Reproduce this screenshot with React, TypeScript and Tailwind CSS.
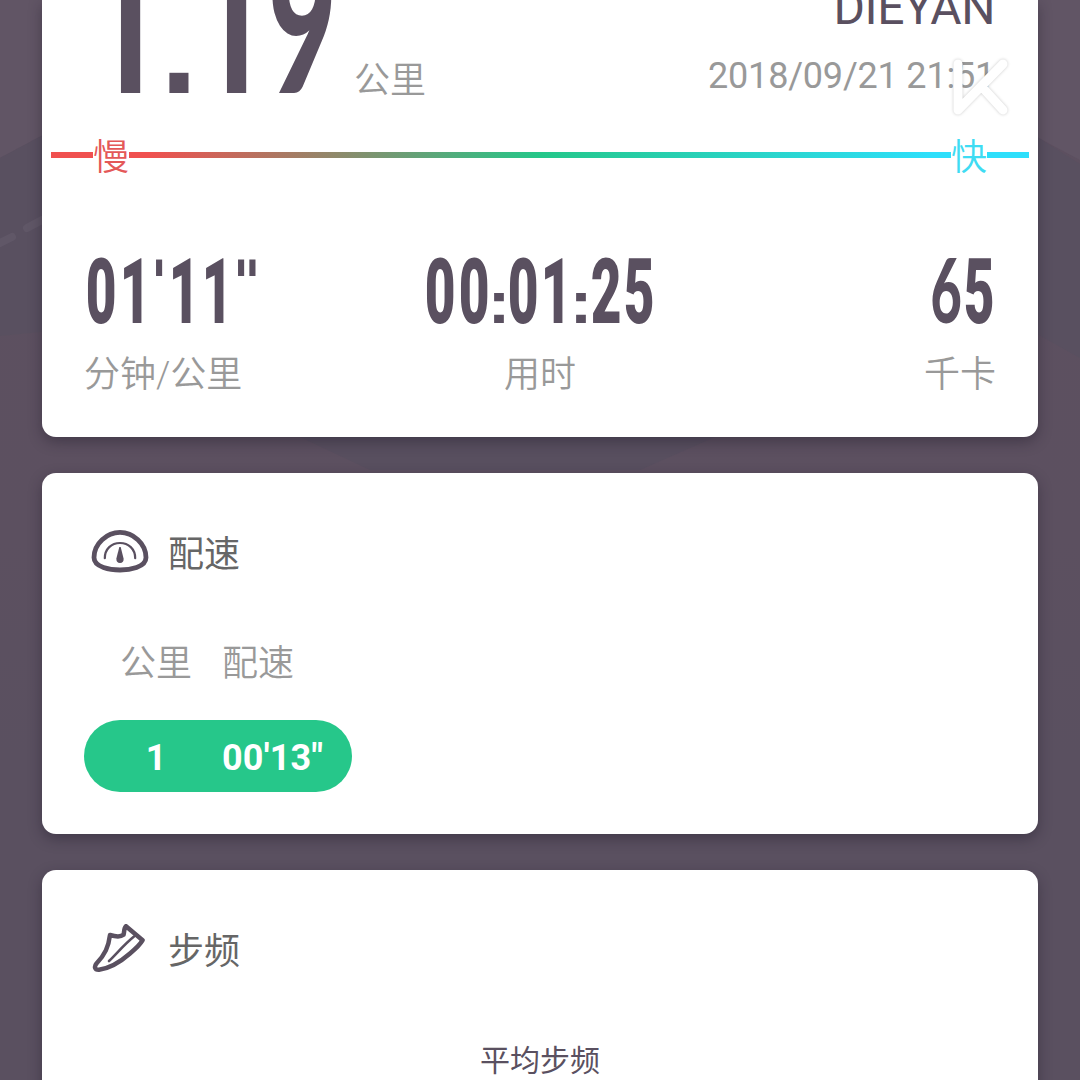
import React from "react";

type Size = "small" | "large";

const cellWidth: Record<Size, Record<string, string>> = {
  small: { digit: "w-[33.1px]", mark: "w-[16.7px]", double: "w-[25px]" },
  large: { digit: "w-[70px]", mark: "w-[36px]", double: "w-[50px]" },
};

const markStyle: Record<Size, string> = {
  small: "font-['Liberation_Sans'] text-[60px] leading-[40px] scale-x-[1.15]",
  large: "font-['Liberation_Sans'] text-[135px] leading-[100px] scale-x-100",
};

function glyphClass(c: string, size: Size) {
  if (c === ":" || c === ".") return markStyle[size];
  if (c === "'" || c === '"') return "font-['DejaVu_Sans'] text-[60px] leading-[40px] scale-x-[0.88] -translate-y-[19px]";
  if (c === "6" || c === "9") return "font-['Lato'] font-black leading-[0.4] scale-x-[0.6]";
  return "font-black scale-x-[0.59]";
}

function Digits({ value, size = "small" }: { value: string; size?: Size }) {
  const cells = cellWidth[size];
  const text = size === "small" ? "h-16 text-[90px] leading-[64px]" : "h-[136px] text-[198px] leading-[136px]";
  return (
    <div className={`flex items-baseline font-bold text-[#5a5060] ${text}`}>
      {value.split("").map((c, i) => {
        const w = c === '"' ? cells.double : "':.".includes(c) ? cells.mark : cells.digit;
        return (
          <span key={i} className={`flex shrink-0 items-baseline justify-center ${w}`}>
            <span className={`block origin-center ${glyphClass(c, size)}`}>{c}</span>
          </span>
        );
      })}
    </div>
  );
}

function Backdrop() {
  return (
    <svg className="absolute inset-0 -z-10" width="1080" height="1080" viewBox="0 0 1080 1080">
      <defs>
        <linearGradient id="fade" x1="0" y1="0" x2="0" y2="1">
          <stop offset="0" stopColor="#5d5060" />
          <stop offset="0.5" stopColor="#5c5060" />
          <stop offset="0.7" stopColor="#5a5060" />
        </linearGradient>
      </defs>
      <rect width="1080" height="1080" fill="url(#fade)" />
      <path d="M0 0H1080V160L1020 128L540 0L60 126L0 158Z" fill="#615565" />
      <path d="M0 158L60 126H1020L1080 164V358L1030 330H60L0 336Z" fill="#595060" />
      <path d="M300 437L370 470H640L715 437Z" fill="#584f5f" />
      <path d="M0 243L12 237M27 228L42 220" stroke="#605767" strokeWidth="8" strokeLinecap="round" />
    </svg>
  );
}

function Gauge() {
  return (
    <svg width="58" height="44" viewBox="0 0 58 44" fill="none" stroke="#5a5060">
      <path
        d="M29 2.400C42 2.400 55 13.500 55 27.500C55 33 51 35.500 45.500 37.500C36 40.800 22 40.800 12.500 37.500C7 35.500 3 33 3 27.500C3 13.500 16 2.400 29 2.400Z"
        strokeWidth="4.800"
      />
      <path d="M13.800 28.200C13.800 19 20.500 13 29 13S44.200 19 44.200 28.200" strokeWidth="2.200" strokeLinecap="round" />
      <path d="M28.300 17H29.700L32.600 28.500C33 31 31.500 33 29 33S25 31 25.400 28.500Z" fill="#5a5060" stroke="none" />
    </svg>
  );
}

function Shoe() {
  return (
    <svg width="58" height="50" viewBox="0 0 58 50" fill="none" stroke="#5a5060" strokeLinejoin="round" strokeLinecap="round">
      <path
        d="M35 2.200L51.600 16.200C49.500 20 45 24.500 39 29.500C31 36.500 20 44 8 45.800C3.500 46 3 42.500 5.500 39.500C14 30.500 17.500 23 19 11C24 12.500 30 12.800 32.500 10.800C33.500 8.500 32.500 4.500 35 2.200Z"
        strokeWidth="4.500"
      />
      <path d="M18 37C25 30.500 33 20.500 43 12.500" strokeWidth="2.600" />
    </svg>
  );
}

function Watermark() {
  return (
    <svg
      className="absolute top-[52px] left-[904px] overflow-visible drop-shadow-[0_0_1.5px_rgba(0,0,0,0.22)]"
      width="64"
      height="70"
      viewBox="0 0 64 70"
      fill="none"
      stroke="white"
      strokeWidth="9"
      strokeLinecap="round"
      strokeLinejoin="round"
    >
      <path d="M12 12V58L57 12M36 35L57 58" />
    </svg>
  );
}

const card = "relative bg-white shadow-[0_5px_14px_rgba(30,25,40,0.4)]";

function SectionTitle({ icon, title }: { icon: React.ReactNode; title: string }) {
  return (
    <div className="flex items-center">
      <div className="flex w-[77px] justify-start">{icon}</div>
      <h2 className="pt-1.5 text-4xl leading-[52px] text-[#666666]">{title}</h2>
    </div>
  );
}

export default function App() {
  return (
    <main className="relative isolate flex h-[1080px] w-[1080px] flex-col gap-9 overflow-hidden px-[42px] font-['Roboto','Noto_Sans_CJK_SC',sans-serif] text-[#999999]">
      <Backdrop />

      <section className={`${card} flex h-[437px] shrink-0 flex-col rounded-b-[14px]`}>
        <header className="flex h-[128px] items-start justify-between pr-[43px] pl-[49px]">
          <div className="flex">
            <div className="-mt-[43px]">
              <Digits value="1.19" size="large" />
            </div>
            <span className="mt-[55px] ml-[17px] text-4xl leading-[52px] font-[350]">公里</span>
          </div>
          <div className="-mt-5 flex flex-col items-end">
            <span className="text-[48px] leading-[56px] tracking-[-0.4px] text-[#5a5060]">DIEYAN</span>
            <time className="mt-4 text-4xl leading-[48px] tracking-[-0.2px]">2018/09/21 21:51</time>
          </div>
        </header>
        <Watermark />

        <div className="mx-[9px] flex h-[54px] items-center bg-[linear-gradient(90deg,#f0504f_0%,#f0504f_10%,#24c789_50%,#2ddffb_90%)] bg-[length:100%_6px] bg-center bg-no-repeat px-[42px] text-4xl leading-[48px] font-[350]">
          <span className="h-[54px] w-9 bg-white pt-1.5 text-[#e45858]">慢</span>
          <span className="ml-auto h-[54px] w-9 bg-white pt-1.5 text-[#3fdcf3]">快</span>
        </div>

        <div className="mt-[79px] grid grid-cols-3 px-[43px] text-4xl leading-[52px] font-[350]">
          <div className="flex flex-col items-start gap-6">
            <Digits value={`01'11"`} />
            <span className="-ml-px">分钟/公里</span>
          </div>
          <div className="flex flex-col items-center gap-6">
            <Digits value="00:01:25" />
            <span>用时</span>
          </div>
          <div className="-mr-px flex flex-col items-end gap-6">
            <Digits value="65" />
            <span>千卡</span>
          </div>
        </div>
      </section>

      <section className={`${card} h-[361px] shrink-0 rounded-[14px] px-[42px] pt-[50px]`}>
        <div className="pl-[7px]">
          <SectionTitle icon={<Gauge />} title="配速" />
        </div>
        <div className="mt-[57px] flex text-4xl leading-[52px] font-[350]">
          <span className="ml-9 w-[102px]">公里</span>
          <span>配速</span>
        </div>
        <div className="mt-[30px] flex h-[72px] w-[268px] items-center rounded-full bg-[#26c78a] pt-1 text-4xl font-bold text-white">
          <span className="ml-9 w-[72px] text-center">1</span>
          <span className="ml-[30px] tracking-[0.2px]">00'13"</span>
        </div>
      </section>

      <section className={`${card} h-[361px] shrink-0 rounded-[14px] px-[42px] pt-[50px]`}>
        <div className="pl-[7px]">
          <SectionTitle icon={<Shoe />} title="步频" />
        </div>
        <p className="mt-[61px] text-center text-3xl leading-[44px] text-[#5a5060]">平均步频</p>
      </section>
    </main>
  );
}
